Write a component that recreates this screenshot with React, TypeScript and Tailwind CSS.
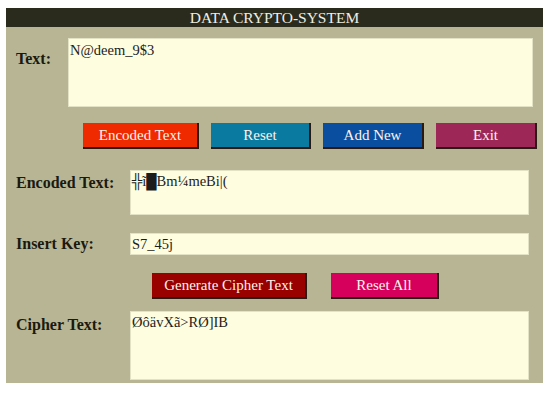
import React from "react";

const serif = { fontFamily: '"Liberation Serif", "Times New Roman", serif' };

type BtnProps = { label: string; className: string };

function Btn({ label, className }: BtnProps) {
  return (
    <button
      type="button"
      className={`h-[26px] border-b-2 border-r-2 border-[#2a1a12] text-[15px] leading-none text-[#fdf2ec] ${className}`}
    >
      {label}
    </button>
  );
}

function Field({ value, className }: { value: string; className: string }) {
  return (
    <div
      className={`border border-[#e4e2c4] bg-[#fefde0] px-[1px] text-[14.5px] leading-[17px] text-[#1c1c1c] ${className}`}
    >
      {value}
    </div>
  );
}

export default function App() {
  return (
    <div className="min-h-[393px] bg-white pl-[6px] pt-[8px]" style={serif}>
      <div className="flex h-[375px] w-[537px] flex-col bg-[#b8b594]">
        <div className="flex h-[19px] items-center justify-center bg-[#2a2b1c] text-[15.5px] leading-none text-[#eeeee4]">
          DATA CRYPTO-SYSTEM
        </div>

        <div className="mt-[11px] flex items-start">
          <div className="mt-[9px] w-[62px] pl-[10px] text-[16px] font-bold text-[#1a1a10]">Text:</div>
          <Field value="N@deem_9$3" className="h-[69px] w-[465px] pt-[3px]" />
        </div>

        <div className="ml-[77px] mt-[16px] flex gap-[12px]">
          <Btn label="Encoded Text" className="w-[116px] bg-[#f02a00]" />
          <Btn label="Reset" className="w-[100px] bg-[#0b7aa0]" />
          <Btn label="Add New" className="w-[101px] bg-[#0a4f9f]" />
          <Btn label="Exit" className="w-[101px] bg-[#9d2858]" />
        </div>

        <div className="mt-[21px] flex items-start">
          <div className="mt-[1px] w-[124px] pl-[10px] text-[16px] font-bold text-[#1a1a10]">Encoded Text:</div>
          <Field value="╬ĩ█Bm¼meBi|(" className="h-[45px] w-[399px] pt-[2px]" />
        </div>

        <div className="mt-[17px] flex items-center">
          <div className="w-[124px] pl-[10px] text-[16px] font-bold text-[#1a1a10]">Insert Key:</div>
          <Field value="S7_45j" className="flex h-[22px] w-[399px] items-center" />
        </div>

        <div className="ml-[146px] mt-[17px] flex gap-[24px]">
          <Btn label="Generate Cipher Text" className="w-[155px] bg-[#990000]" />
          <Btn label="Reset All" className="w-[108px] bg-[#d6005c]" />
        </div>

        <div className="mt-[12px] flex items-start">
          <div className="mt-[2px] w-[124px] pl-[10px] text-[16px] font-bold text-[#1a1a10]">Cipher Text:</div>
          <Field value="ØôävXã>RØ]IB" className="h-[69px] w-[399px] pt-[2px]" />
        </div>
      </div>
    </div>
  );
}
